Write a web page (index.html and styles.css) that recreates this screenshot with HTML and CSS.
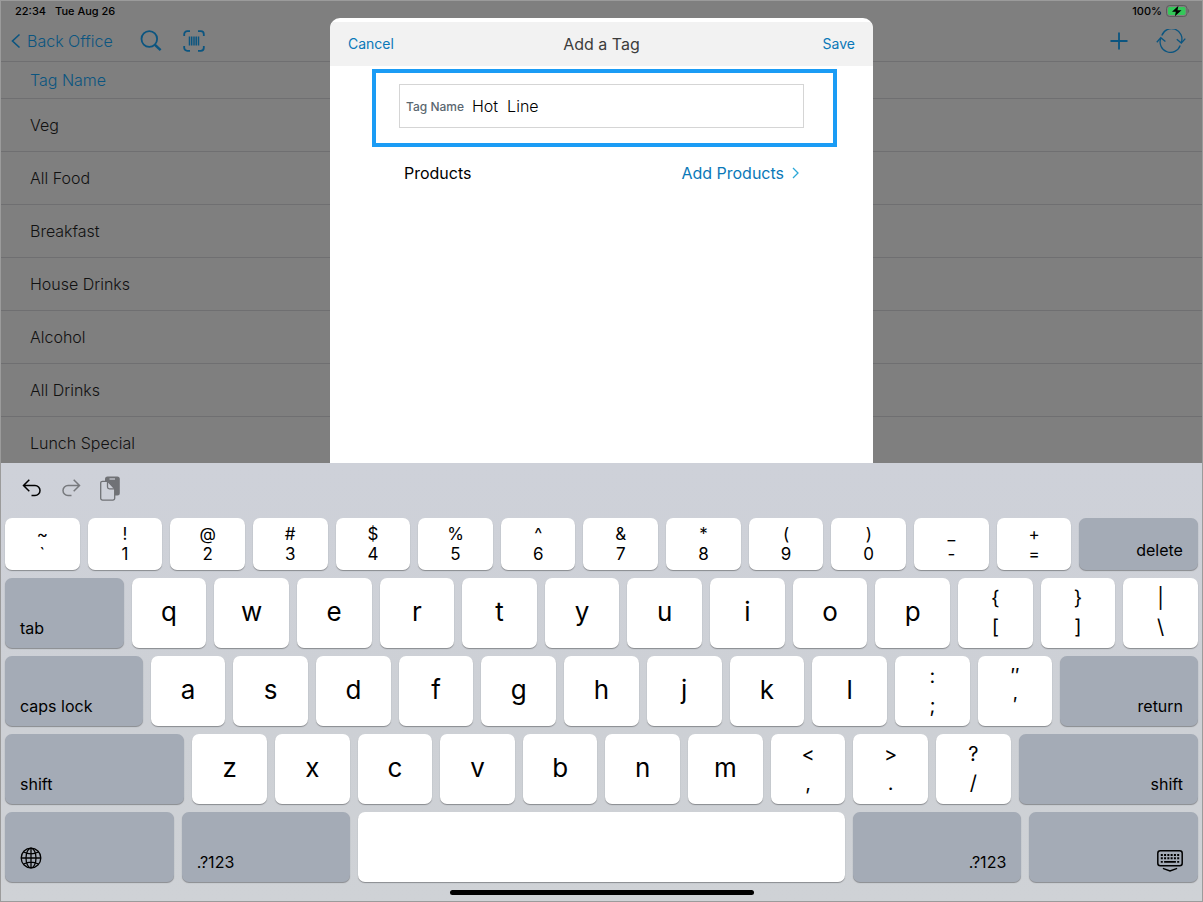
FILE: index.html
```html
<!DOCTYPE html>
<html lang="en">
<head>
    <meta charset="UTF-8">
    <meta name="viewport" content="width=device-width, initial-scale=1.0">
    <title>Add a Tag</title>
    <link rel="stylesheet" href="styles.css">
</head>
<body>
<div class="screen">
    <div class="app">
        <div class="status-bar">
            <span>22:34</span>
            <span>Tue Aug 26</span>
            <span class="battery-text">100%</span>
            <svg class="battery" width="24" height="12" viewBox="0 0 24 12">
                <rect x="0.5" y="0.5" width="20.5" height="11" rx="3.2" fill="none" stroke="#5c5c5c"/>
                <rect x="2" y="2" width="17.5" height="8" rx="1.8" fill="#34c759"/>
                <path d="M22.2 4v4c1.3-.6 1.3-3.4 0-4z" fill="#5c5c5c"/>
                <path d="M12.4 0.8 6 6.8h3.8L8.9 11.2l6.6-6h-4z" fill="#000"/>
            </svg>
        </div>
        <div class="nav-bar">
            <a href="#" class="back">
                <svg width="10" height="16" viewBox="0 0 10 16"><path d="M8.5 1.5 1.5 8l7 6.5" fill="none" stroke="currentColor" stroke-width="1.6"/></svg>
                Back Office
            </a>
            <button type="button" class="icon-btn search" aria-label="Search">
                <svg width="22" height="22" viewBox="0 0 22 22" fill="none" stroke="currentColor"><circle cx="9.3" cy="9" r="7.8" stroke-width="1.8"/><path d="m15 14.800 5.600 5.400" stroke-width="2.500"/></svg>
            </button>
            <button type="button" class="icon-btn" aria-label="Scan">
                <svg width="22" height="22" viewBox="0 0 22 22" fill="none" stroke="currentColor">
                    <path d="M1.200 6V4.200a3 3 0 0 1 3-3H7M15 1.200h2.800a3 3 0 0 1 3 3V6M20.800 16v1.800a3 3 0 0 1-3 3H15M7 20.800H4.200a3 3 0 0 1-3-3V16" stroke-width="1.800"/>
                    <path d="M6.500 6.500v9M8.700 6.500v9M11 6.500v9M13.200 6.500v9M15.500 6.500v9" stroke-width="1.500"/>
                </svg>
            </button>
            <button type="button" class="icon-btn plus" aria-label="Add">
                <svg width="18" height="18" viewBox="0 0 18 18"><path d="M9 .5v17M.5 9h17" fill="none" stroke="currentColor" stroke-width="1.8"/></svg>
            </button>
            <button type="button" class="icon-btn" aria-label="Refresh">
                <svg width="30" height="24" viewBox="0 0 30 24" fill="none" stroke="currentColor" stroke-width="1.3">
                    <path d="M5.800 6.500A10.300 10.300 0 0 1 25.300 13.500M24.200 16.500A10.300 10.300 0 0 1 4.700 9.500"/>
                    <path d="M.8 13.300 4.800 8.700l4.600 3.800M20.800 10.200l4.500 3.800 4-4.400"/>
                </svg>
            </button>
        </div>
        <table class="tags">
            <thead>
                <tr><th>Tag Name</th></tr>
            </thead>
            <tbody>
                <tr><td>Veg</td></tr>
                <tr><td>All Food</td></tr>
                <tr><td>Breakfast</td></tr>
                <tr><td>House Drinks</td></tr>
                <tr><td>Alcohol</td></tr>
                <tr><td>All Drinks</td></tr>
                <tr><td>Lunch Special</td></tr>
            </tbody>
        </table>

        <div class="modal">
            <div class="modal-header">
                <button type="button" class="modal-btn">Cancel</button>
                <h1 class="modal-title">Add a Tag</h1>
                <button type="submit" form="tagForm" class="modal-btn save">Save</button>
            </div>
            <form class="modal-body" id="tagForm">
                <div class="highlight">
                    <div class="field">
                        <label for="tagName">Tag Name</label>
                        <input type="text" id="tagName" name="tagName" value="Hot  Line">
                    </div>
                </div>
                <div class="products">
                    <span>Products</span>
                    <a href="#" class="add-products">Add Products
                        <svg width="7" height="12" viewBox="0 0 7 12"><path d="m1 1 5 5-5 5" fill="none" stroke="#2ba8d8" stroke-width="1.3"/></svg>
                    </a>
                </div>
            </form>
        </div>
    </div>

    <div class="keyboard">
        <div class="tools">
            <button type="button" class="icon-btn" aria-label="Undo">
                <svg width="20" height="20" viewBox="0 0 20 20" fill="none" stroke="#000" stroke-width="1.500"><path d="M7.300 1.800 1.500 7.500l5.800 5.700M1.500 7.500H13a5 5 0 0 1 0 10H9.500"/></svg>
            </button>
            <button type="button" class="icon-btn redo" aria-label="Redo">
                <svg width="20" height="20" viewBox="0 0 20 20" fill="none" stroke="#77797d" stroke-width="1.500"><path d="m12.700 1.800 5.800 5.700-5.800 5.700M18.500 7.500H7a5 5 0 0 0 0 10h3.500"/></svg>
            </button>
            <button type="button" class="icon-btn" aria-label="Paste">
                <svg width="20" height="25" viewBox="0 0 20 25">
                    <rect x="5" y="0.500" width="14.800" height="19" rx="2.500" fill="#707276"/>
                    <path d="M9.500 3h5.500" stroke="#ced1d9" stroke-width="1.200"/>
                    <path d="M2.500 5.300h5.200l7 7.500v9.500a1.800 1.800 0 0 1-1.800 1.800H2.500a1.800 1.800 0 0 1-1.800-1.800V7.100a1.800 1.800 0 0 1 1.800-1.800z" fill="#ced1d9" stroke="#707276" stroke-width="1.300"/>
                    <path d="M7.500 5.500v5.500a1.800 1.800 0 0 0 1.800 1.800h5.200" fill="none" stroke="#707276" stroke-width="1.300"/>
                </svg>
            </button>
        </div>
        <div class="row row-numbers">
            <button type="button" class="key dual"><span>~</span><span>`</span></button>
            <button type="button" class="key dual"><span>!</span><span>1</span></button>
            <button type="button" class="key dual"><span>@</span><span>2</span></button>
            <button type="button" class="key dual"><span>#</span><span>3</span></button>
            <button type="button" class="key dual"><span>$</span><span>4</span></button>
            <button type="button" class="key dual"><span>%</span><span>5</span></button>
            <button type="button" class="key dual"><span>^</span><span>6</span></button>
            <button type="button" class="key dual"><span>&amp;</span><span>7</span></button>
            <button type="button" class="key dual"><span>*</span><span>8</span></button>
            <button type="button" class="key dual"><span>(</span><span>9</span></button>
            <button type="button" class="key dual"><span>)</span><span>0</span></button>
            <button type="button" class="key dual"><span>_</span><span>-</span></button>
            <button type="button" class="key dual"><span>+</span><span>=</span></button>
            <button type="button" class="key dark tab right">delete</button>
        </div>
        <div class="row">
            <button type="button" class="key dark tab">tab</button>
            <button type="button" class="key">q</button>
            <button type="button" class="key">w</button>
            <button type="button" class="key">e</button>
            <button type="button" class="key">r</button>
            <button type="button" class="key">t</button>
            <button type="button" class="key">y</button>
            <button type="button" class="key">u</button>
            <button type="button" class="key">i</button>
            <button type="button" class="key">o</button>
            <button type="button" class="key">p</button>
            <button type="button" class="key dual"><span>{</span><span>[</span></button>
            <button type="button" class="key dual"><span>}</span><span>]</span></button>
            <button type="button" class="key dual"><span>|</span><span>\</span></button>
        </div>
        <div class="row">
            <button type="button" class="key dark caps">caps lock</button>
            <button type="button" class="key">a</button>
            <button type="button" class="key">s</button>
            <button type="button" class="key">d</button>
            <button type="button" class="key">f</button>
            <button type="button" class="key">g</button>
            <button type="button" class="key">h</button>
            <button type="button" class="key">j</button>
            <button type="button" class="key">k</button>
            <button type="button" class="key">l</button>
            <button type="button" class="key dual"><span>:</span><span>;</span></button>
            <button type="button" class="key dual"><span>″</span><span>′</span></button>
            <button type="button" class="key dark caps right">return</button>
        </div>
        <div class="row">
            <button type="button" class="key dark shift">shift</button>
            <button type="button" class="key">z</button>
            <button type="button" class="key">x</button>
            <button type="button" class="key">c</button>
            <button type="button" class="key">v</button>
            <button type="button" class="key">b</button>
            <button type="button" class="key">n</button>
            <button type="button" class="key">m</button>
            <button type="button" class="key dual"><span>&lt;</span><span>,</span></button>
            <button type="button" class="key dual"><span>&gt;</span><span>.</span></button>
            <button type="button" class="key dual"><span>?</span><span>/</span></button>
            <button type="button" class="key dark shift right">shift</button>
        </div>
        <div class="row">
            <button type="button" class="key dark wide globe" aria-label="Next keyboard">
                <svg width="22" height="22" viewBox="0 0 22 22" fill="none" stroke="#000" stroke-width="1.300">
                    <circle cx="11" cy="11" r="9.800"/>
                    <ellipse cx="11" cy="11" rx="5" ry="9.800"/>
                    <path d="M11 1.200v19.600M1.200 11h19.600M3.600 5c4.300 2.200 10.500 2.200 14.800 0M3.600 17c4.300-2.200 10.500-2.200 14.800 0"/>
                </svg>
            </button>
            <button type="button" class="key dark wide">.?123</button>
            <button type="button" class="key space" aria-label="Space"></button>
            <button type="button" class="key dark wide right">.?123</button>
            <button type="button" class="key dark wide right" aria-label="Hide keyboard">
                <svg width="26" height="22" viewBox="0 0 26 22" fill="none" stroke="#000">
                    <rect x="0.800" y="0.800" width="24.400" height="15" rx="2.500" stroke-width="1.500"/>
                    <path d="M3.800 5h18.400M3.800 8.300h18.400" stroke-width="2" stroke-dasharray="2 1.280"/>
                    <path d="M3.800 11.800h2M7.100 11.800h11.800M20.200 11.800h2" stroke-width="1.800"/>
                    <path d="m6.500 18.600 6.500 2.300 6.500-2.300" stroke-width="1.500" stroke-linecap="round"/>
                </svg>
            </button>
        </div>
        <div class="home-bar"></div>
    </div>
</div>
</body>
</html>
```

FILE: styles.css
```css
* {
    box-sizing: border-box;
}
body {
    margin: 0;
    font-family: Inter, "Liberation Sans", sans-serif;
    color: #000;
}
button, input {
    font-family: inherit;
    color: inherit;
    padding: 0;
    border: none;
    background: none;
}
button {
    cursor: pointer;
}
a {
    text-decoration: none;
}
svg {
    display: block;
}
.screen {
    height: 100vh;
    display: flex;
    flex-direction: column;
    border: 1px solid #9b9b9b;
}

/* tag list behind the modal */
.app {
    flex: 1;
    min-height: 0;
    overflow: hidden;
    position: relative;
    background-color: #7f7f7f;
}
.status-bar {
    display: flex;
    align-items: center;
    gap: 9px;
    height: 20px;
    padding: 0 12px 0 14px;
    font-size: 11px;
    font-weight: 500;
}
.battery-text {
    margin-left: auto;
}
.battery {
    margin-left: -5px;
}
.nav-bar {
    display: flex;
    align-items: center;
    height: 41px;
    padding: 0 16px 0 10px;
    color: #0b5580;
    border-bottom: 1px solid #6f6f71;
}
.back {
    display: flex;
    align-items: center;
    gap: 6px;
    font-size: 16px;
    font-weight: 300;
    color: inherit;
}
.search {
    margin: 0 21px 0 27px;
}
.plus {
    margin: 0 28px 0 auto;
}
.tags {
    width: 100%;
    border-collapse: separate;
    border-spacing: 0;
    font-size: 16px;
    color: #111;
}
.tags th, .tags td {
    height: 53px;
    padding: 0 29px;
    font-weight: 300;
    text-align: left;
    border-bottom: 1px solid #6f6f71;
}
.tags th {
    height: 37px;
    color: #0b5580;
}

.modal {
    position: absolute;
    top: 17px;
    bottom: 0;
    left: 0;
    right: 0;
    width: 543px;
    max-width: 100%;
    margin: 0 auto;
    padding-top: 4px;
    overflow: hidden;
    background-color: #fff;
    border-radius: 10px 10px 0 0;
}
.modal-header {
    display: flex;
    align-items: center;
    height: 44px;
    padding: 0 18px 1px;
    background-color: #f2f2f2;
}
.modal-title {
    flex: 2;
    margin: 0;
    font-size: 16px;
    font-weight: 400;
    color: #3c3c3c;
    text-align: center;
}
.modal-btn {
    flex: 1;
    font-size: 14px;
    color: #0a78b8;
    text-align: left;
}
.save {
    text-align: right;
}
.modal-body {
    padding: 3px 36px 0 42px;
}
.highlight {
    padding: 11px 29px 15px 23px;
    border: 4px solid #1b9cf5;
}
.field {
    display: flex;
    align-items: center;
    gap: 8px;
    height: 44px;
    padding: 0 6px;
    border: 1px solid #d5d5d5;
}
.field label {
    font-size: 12px;
    font-weight: 500;
    color: #5b6770;
}
.field input {
    flex: 1;
    min-width: 0;
    font-size: 16px;
    font-weight: 300;
    outline: none;
    white-space: pre;
}
.products {
    display: flex;
    justify-content: space-between;
    align-items: center;
    padding: 16px 38px 0 32px;
    font-size: 16px;
    line-height: 20px;
}
.add-products {
    display: flex;
    align-items: center;
    gap: 8px;
    color: #0a78b8;
}

/* keyboard */
.keyboard {
    display: flex;
    flex-direction: column;
    gap: 8px;
    padding: 0 4px 6px;
    background: linear-gradient(#ced1d9, #cdd0d5 60%, #cfd2d6);
}
.tools {
    display: flex;
    align-items: center;
    gap: 19px;
    height: 47px;
    padding: 3px 17px 0;
}
.row {
    display: flex;
    gap: 8px;
    height: 70px;
}
.row-numbers {
    height: 52px;
}
/* basis and grow share one number so every row keeps the same key width */
.key {
    flex: 75 1 75px;
    min-width: 0;
    padding-bottom: 3px;
    font-size: 26px;
    background-color: #fff;
    border-radius: 7px;
    box-shadow: 0 1px 1px #898b8f;
}
.dual {
    display: flex;
    flex-direction: column;
    align-items: center;
    justify-content: center;
    padding: 0;
    font-size: 20px;
    line-height: 29px;
}
.row-numbers .dual {
    font-size: 17px;
    line-height: 20px;
}
.dark {
    display: flex;
    align-items: flex-end;
    padding: 0 15px 10px;
    font-size: 16px;
    line-height: 20px;
    background-color: #a4abb6;
}
.right {
    justify-content: flex-end;
}
.tab {
    flex: 119 1 119px;
}
.caps {
    flex: 138 1 138px;
}
.shift {
    flex: 180 1 180px;
}
.wide {
    flex: 169 1 169px;
}
.space {
    flex: 487 1 487px;
}
.globe {
    padding-bottom: 13px;
}
.home-bar {
    width: 304px;
    height: 5px;
    margin: 0 auto;
    border-radius: 3px;
    background-color: #000;
}
```
